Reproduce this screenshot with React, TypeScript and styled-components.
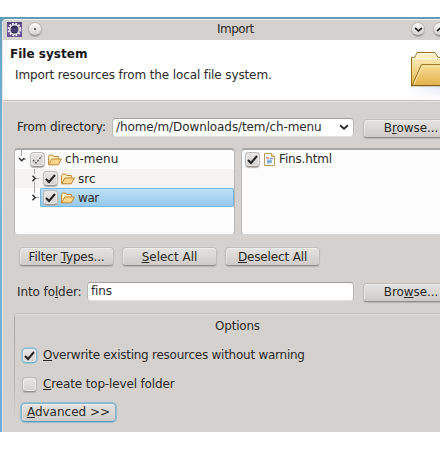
import React from "react";
import styled, { createGlobalStyle } from "styled-components";

const Global = createGlobalStyle`
  * { box-sizing: border-box; }
  html, body { margin: 0; background: #fff; overflow: hidden; }
  body { font: 12px/16px "DejaVu Sans", sans-serif; color: #2b2a28; }
  svg { display: block; flex: none; }
`;
const Frame = styled.div`
  width: 440px; height: 415px; margin-top: 17px; padding: 2px 0 0 2px;
  overflow: hidden; background: linear-gradient(#649ab5, #69aacb 45px, #79b3d8 150px, #6baed7);
`;
const Dialog = styled.main`
  width: 438px; height: 413px; overflow: hidden; background: #d5d1ce;
  border-left: 1px solid #e7e5e3; border-top: 1px solid #f3f2f0; border-top-left-radius: 4px;
`;
const TitleBar = styled.header`
  height: 20px; display: flex; align-items: center; padding: 0 0 2px 4px;
`;
const WindowTitle = styled.div`flex: 1; padding-left: 175px; white-space: nowrap; letter-spacing: -.5px;`;
const Round = styled.span`
  width: 14px; height: 14px; flex: none; margin-left: 6px; border-radius: 50%;
  display: grid; place-items: center; border: 1px solid #bcbab8; border-bottom-color: #8f8d8b;
  background: linear-gradient(#fafaf9, #d5d3d1); box-shadow: 0 1px 1px #aaa7a4;
`;
const WindowButtons = styled.div`display: flex; width: 29px; height: 14px; & > span { margin-left: 0; margin-right: 8px; }`;
const Banner = styled.section`
  height: 60px; display: flex; justify-content: space-between; background: #fff; overflow: hidden;
`;
const BannerText = styled.div`padding: 6px 0 0 7px;`;
const Heading = styled.h1`font-size: 12px; line-height: 16px; margin: 0 0 5px; color: #161616; letter-spacing: .02px;`;
const Sub = styled.div`padding-left: 5px; letter-spacing: -.12px; white-space: nowrap;`;
const Body = styled.section`
  height: 332px; border-top: 1px solid #c1bebb; box-shadow: inset 0 1px #e9e7e5;
  padding: 17px 0 0 11px;
`;
const FieldRow = styled.div<{ $top?: number }>`
  display: flex; height: 20px; margin-top: ${p => p.$top ?? 0}px; padding-left: 3px;
`;
const FieldLabel = styled.label<{ $w: number; $line?: number }>`
  width: ${p => p.$w}px; flex: none; line-height: ${p => p.$line ?? 18}px; white-space: nowrap; letter-spacing: -.1px;
`;
const Input = styled.div<{ $w: number }>`
  width: ${p => p.$w}px; height: 19px; flex: none; display: flex; align-items: center; justify-content: space-between;
  padding: 0 4px 1px 3px; background: #fff; border: 1px solid #bbb8b5; border-top-color: #a19e9b;
  border-bottom-color: #e2e0de; border-radius: 4px; white-space: nowrap; letter-spacing: -.1px;
`;
const Button = styled.button<{ $w: number; $focus?: boolean; $ls?: number }>`
  width: ${p => p.$w}px; height: 19px; padding: 0; flex: none; font: inherit; line-height: 17px; color: inherit;
  white-space: nowrap; letter-spacing: ${p => p.$ls ?? 0}px; border-radius: 4px;
  border: 1px solid ${p => p.$focus ? "#84b4cb" : "#c0bdba"};
  border-bottom-color: ${p => p.$focus ? "#599abc" : "#918e8b"};
  background: linear-gradient(#e5e3e1, #cecbc8);
  box-shadow: inset 0 1px #efedec, inset 1px 0 #e7e5e3, ${p => p.$focus ? "0 0 1px 1px #92bdd0" : "0 1px 1px #b5b2af"};
`;
const Browse = styled(Button)`margin: 1px 0 0 9px;`;
const Panes = styled.div`display: flex; gap: 6px; height: 87px; margin-top: 10px;`;
const Pane = styled.div<{ $w: number }>`
  width: ${p => p.$w}px; flex: none; overflow: hidden; border: 1px solid #b9b6b3; border-top: 2px solid #aaa7a4;
  border-bottom-color: #d9d7d5; border-radius: 4px; background: #fcfcfc;
`;
const Item = styled.div<{ $alt?: boolean; $indent: number }>`
  height: 19px; display: flex; align-items: center; padding-left: ${p => p.$indent}px;
  background: ${p => p.$alt ? "#f4f3f2" : "transparent"};
`;
const ItemBody = styled.div<{ $selected?: boolean }>`
  height: 19px; flex: 1; display: flex; align-items: center; gap: 3px; padding-left: 3px; border-radius: 2px;
  background: ${p => p.$selected ? "linear-gradient(#c0e1f7, #94c8ed)" : "transparent"};
  box-shadow: ${p => p.$selected ? "inset 0 0 0 1px #79b6df" : "none"};
`;
const ItemName = styled.span<{ $shift?: number; $ls?: number }>`
  line-height: 18px; margin-top: ${p => p.$shift ?? 0}px; letter-spacing: ${p => p.$ls ?? 0}px;
`;
const Box = styled.span<{ $focus?: boolean }>`
  width: 15px; height: 15px; display: grid; place-items: center; flex: none; border-radius: 4px;
  border: 1px solid ${p => p.$focus ? "#86b9ce" : "#bebbb8"}; border-bottom-color: ${p => p.$focus ? "#72adc8" : "#93908e"};
  background: linear-gradient(#e9e7e5, #d4d1cf);
  box-shadow: inset 0 0 0 1px #edebe9, ${p => p.$focus ? "0 0 1px 1px #a3cad9" : "0 1px 1px #b8b5b2"};
`;
const Actions = styled.div`display: flex; gap: 8px; padding-left: 5px; margin-top: 12px; & > button { line-height: 18px; }`;
const Group = styled.fieldset`
  margin: 11px 0 0; padding: 4px 0 0 6px; height: 119px; min-width: 0; border: 0;
  border-top: 1px solid #c0bdba; border-radius: 4px 0 0;
  background: linear-gradient(#aba8a5, #b9b6b3 70%, #d5d1ce) left top / 1px 105px no-repeat;
  box-shadow: inset 0 1px #dfdcda;
`;
const GroupTitle = styled.div`padding-left: 195px; height: 18px; line-height: 17px; letter-spacing: -.2px;`;
const CheckRow = styled.div<{ $top: number }>`
  height: 17px; display: flex; align-items: center; gap: 6px; margin-top: ${p => p.$top}px; padding-left: 2px;
`;
const CheckLabel = styled.span<{ $ls: number }>`margin-top: -2px; letter-spacing: ${p => p.$ls}px; white-space: nowrap;`;
const Advanced = styled(Button)`margin: 10px 0 0 1px; display: block;`;
const Mnemonic = styled.span`text-decoration: underline; text-decoration-thickness: 1px; text-underline-offset: 1px; text-decoration-skip-ink: none;`;

const Tick = ({ dashed = false }: { dashed?: boolean }) => (
  <svg width="13" height="13" viewBox="0 0 13 13" fill="none">
    <path d="M2 7l3 3 6-7" stroke={dashed ? "#555" : "#222"} strokeWidth={dashed ? 1.3 : 2} strokeDasharray={dashed ? "2 1.2" : undefined} />
  </svg>
);
const Folder = () => (
  <svg width="14" height="12" viewBox="0 0 14 12" stroke="#c18732" strokeLinejoin="round">
    <path d="M.6 10.5v-8l1-1.4h3l1 1.4h4.8v2" fill="#fff0bd" />
    <path d="M.6 10.8L3.8 5h9.6l-3.1 5.8z" fill="#fbd68b" />
  </svg>
);
const BigFolder = () => (
  <svg width="35" height="60" viewBox="0 0 35 60">
    <defs>
      <linearGradient id="back" x2="0" y2="1"><stop stopColor="#fff5cd" /><stop offset="1" stopColor="#e5b64c" /></linearGradient>
      <linearGradient id="front" x2="0" y2="1"><stop stopColor="#f7dc96" /><stop offset="1" stopColor="#e3b14a" /></linearGradient>
      <linearGradient id="shade" x2="1"><stop stopColor="#fff" /><stop offset="1" stopColor="#e0e8f7" /></linearGradient>
      <linearGradient id="veil" x2="0" y2="1"><stop stopColor="#fff" stopOpacity="0" /><stop offset="1" stopColor="#fff" /></linearGradient>
    </defs>
    <path fill="url(#shade)" d="M2 46h33v14H2z" /><path fill="url(#veil)" d="M2 46h33v14H2z" />
    <path d="M6.5 45.5V17.3H10l2-4.8h18l3 4.8h3v28.2z" fill="url(#back)" stroke="#98711f" />
    <path d="M7.5 18.5H35M11 17.3l1.7-3.7h16.7l2.2 3.7" fill="none" stroke="#fffbe8" />
    <path d="M7 45.5l9.5-20.8H36v20.8z" fill="url(#front)" stroke="#8f6717" />
    <path d="M9 44L17.2 26H35" fill="none" stroke="#ffedb1" />
    <path d="M6 45.7h29" stroke="#81601e" strokeWidth="1.3" />
  </svg>
);
const Gear = () => (
  <svg width="15" height="15" viewBox="0 0 15 15">
    <path d="M0 0h15v15H0z" fill="#685196" />
    <path d="M0 0h15v2H0z" fill="#52447b" />
    <circle cx="7.5" cy="7.5" r="5.9" fill="none" stroke="#eeeaf1" strokeWidth="2" strokeDasharray="1.8 1.29" />
    <circle cx="7.5" cy="7.5" r="4.7" fill="#302b50" stroke="#e7e3ed" strokeWidth="1.5" />
    <path d="M4 7h7M4 9h7" stroke="#635392" />
  </svg>
);
const Chevron = ({ kind, size = 9 }: { kind: "down" | "up"; size?: number }) => (
  <svg width={size} height={size} viewBox="0 0 9 9" fill="none" stroke="#292827" strokeWidth="1.7">
    <path d={kind === "down" ? "M1 3l3.5 3L8 3" : "M1 6l3.5-3L8 6"} />
  </svg>
);
const Branch = ({ open = false, last = false }: { open?: boolean; last?: boolean }) => (
  <svg width={open ? 12 : 13} height="19" viewBox={open ? "0 0 12 19" : "0 0 13 19"} fill="none">
    <path d={open ? "M6.5 0v6M9 9.5h2" : last ? "M7.5 0v5M9 9.5h3" : "M7.5 0v5M7.5 13v6M9 9.5h3"} stroke="#aaa7a5" />
    <path d={open ? "M4 8l2.7 2.7L9.5 8" : "M5.5 6.8l2.7 2.7-2.7 2.7"} stroke="#333" strokeWidth="1.5" />
  </svg>
);
const HtmlFile = () => (
  <svg width="13" height="13" viewBox="-1 0 13 13">
    <path d="M.5.5h7l3 3v9H.5z" fill="#fff" stroke="#b89d5b" /><path d="M7.5.5v3h3" fill="#ecd58e" stroke="#b89d5b" />
    <path d="M2 4h3v2H2z" fill="#ee9b9b" /><path d="M3 6.5h5v3.5H3z" fill="#8fbbd8" />
    <path d="M6 5.5h3M4 8.5h2" stroke="#668fb8" /><path d="M2 10.8h5" stroke="#bbd3e4" />
  </svg>
);

export default function App() {
  return (
    <>
      <Global />
      <Frame><Dialog>
        <TitleBar>
          <Gear /><Round><svg width="2" height="2"><circle cx="1" cy="1" r="1" fill="#333" /></svg></Round>
          <WindowTitle>Import</WindowTitle>
          <WindowButtons><Round><Chevron kind="down" /></Round><Round><Chevron kind="up" /></Round></WindowButtons>
        </TitleBar>
        <Banner>
          <BannerText><Heading>File system</Heading><Sub>Import resources from the local file system.</Sub></BannerText>
          <BigFolder />
        </Banner>
        <Body>
          <FieldRow>
            <FieldLabel $w={95}>From directory:</FieldLabel>
            <Input $w={242}><span>/home/m/Downloads/tem/ch-menu</span><Chevron kind="down" size={10} /></Input>
            <Browse $w={96} $ls={-0.1}>B<Mnemonic>r</Mnemonic>owse...</Browse>
          </FieldRow>
          <Panes>
            <Pane $w={221}>
              <Item $indent={0}><Branch open /><ItemBody><Box><Tick dashed /></Box><Folder /><ItemName $shift={-1} $ls={0.1}>ch-menu</ItemName></ItemBody></Item>
              <Item $indent={12} $alt><Branch /><ItemBody><Box><Tick /></Box><Folder /><ItemName>src</ItemName></ItemBody></Item>
              <Item $indent={12}><Branch last /><ItemBody $selected><Box><Tick /></Box><Folder /><ItemName $ls={-0.4}>war</ItemName></ItemBody></Item>
            </Pane>
            <Pane $w={210}>
              <Item $indent={0}><ItemBody><Box><Tick /></Box><HtmlFile /><ItemName $shift={-1} $ls={-0.15}>Fins.html</ItemName></ItemBody></Item>
            </Pane>
          </Panes>
          <Actions>
            <Button $w={95} $ls={-0.2}>Filter <Mnemonic>T</Mnemonic>ypes...</Button>
            <Button $w={95}><Mnemonic>S</Mnemonic>elect All</Button>
            <Button $w={95} $ls={-0.15}><Mnemonic>D</Mnemonic>eselect All</Button>
          </Actions>
          <FieldRow $top={16}>
            <FieldLabel $w={70} $line={20}>Into fo<Mnemonic>l</Mnemonic>der:</FieldLabel>
            <Input $w={267}>fins</Input>
            <Browse $w={96} $ls={-0.1}>Bro<Mnemonic>w</Mnemonic>se...</Browse>
          </FieldRow>
          <Group>
            <GroupTitle>Options</GroupTitle>
            <CheckRow $top={11}><Box $focus><Tick /></Box><CheckLabel $ls={-0.25}><Mnemonic>O</Mnemonic>verwrite existing resources without warning</CheckLabel></CheckRow>
            <CheckRow $top={12}><Box /><CheckLabel $ls={-0.15}><Mnemonic>C</Mnemonic>reate top-level folder</CheckLabel></CheckRow>
            <Advanced $w={95} $focus><Mnemonic>A</Mnemonic>dvanced &gt;&gt;</Advanced>
          </Group>
        </Body>
      </Dialog></Frame>
    </>
  );
}
